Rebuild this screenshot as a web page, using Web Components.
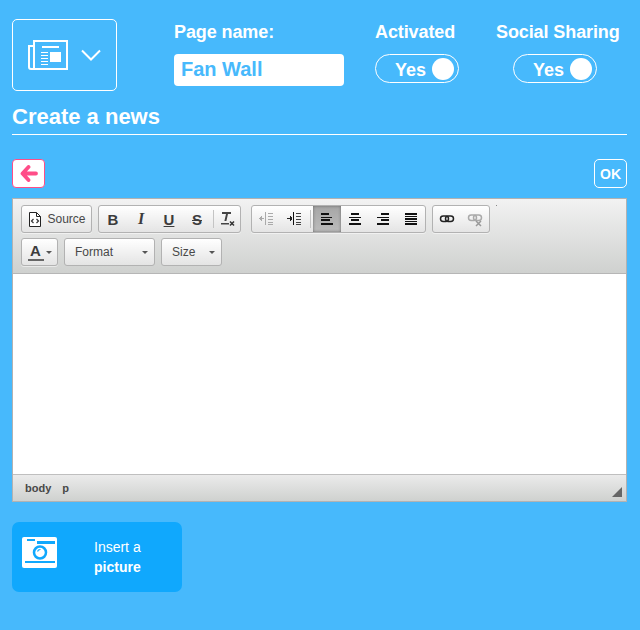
<!DOCTYPE html>
<html>
<head>
<meta charset="utf-8">
<style>
  html, body { margin: 0; padding: 0; }
  body { background: #47b9fc; font-family: "Liberation Sans", Arial, sans-serif; color: #fff; }
</style>
</head>
<body>
<news-page></news-page>
<script>
const ICONS = {
  source: '<svg width="16" height="17" viewBox="0 0 16 17"><path d="M2.500 1.500h7l4 4v10h-11z" fill="#fff" stroke="#222"/><path d="M9.500 1.500v4h4" fill="none" stroke="#222"/><path d="M6.500 8l-2 2 2 2M9.500 8l2 2-2 2" fill="none" stroke="#333" stroke-width="1.200"/></svg>',
  clear: '<svg width="18" height="18" viewBox="0 0 18 18"><path d="M3 2h9v2H9l-1.600 7H5.400L7 4H3z" fill="#444"/><rect x="2" y="13" width="8" height="1.500" fill="#444"/><path d="M11 11.500l4 4M15 11.500l-4 4" stroke="#333" stroke-width="1.500"/></svg>',
  outdent: '<svg width="16" height="16" viewBox="0 0 16 16" shape-rendering="crispEdges"><path d="M7 1h1v13H7z" fill="#aaa"/><path d="M10 2h5v1h-5zM10 5h5v1h-5zM10 8h5v1h-5zM10 11h5v1h-5zM10 13h5v1h-5z" fill="#aaa"/><path d="M1 7h5v1H1zM3 5h1v5H3zM2 6h1v3H2z" fill="#aaa"/></svg>',
  indent: '<svg width="16" height="16" viewBox="0 0 16 16" shape-rendering="crispEdges"><path d="M7 1h1v13H7z" fill="#111"/><path d="M10 2h5v1h-5zM10 5h5v1h-5zM10 8h5v1h-5zM10 11h5v1h-5zM10 13h5v1h-5z" fill="#444"/><path d="M1 7h4v1H1zM4 5h1v5H4zM5 6h1v3H5z" fill="#222"/></svg>',
  left: '<svg width="16" height="16" viewBox="0 0 16 16" shape-rendering="crispEdges"><path d="M2 2h8v2H2zM2 6h11v1H2zM2 8h9v2H2zM2 12h12v2H2z" fill="#111"/></svg>',
  center: '<svg width="16" height="16" viewBox="0 0 16 16" shape-rendering="crispEdges"><path d="M4 2h8v2H4zM2 6h12v1H2zM4 8h8v2H4zM2 12h12v2H2z" fill="#111"/></svg>',
  right: '<svg width="16" height="16" viewBox="0 0 16 16" shape-rendering="crispEdges"><path d="M6 2h8v2H6zM2 6h12v1H2zM6 8h8v2H6zM2 12h12v2H2z" fill="#111"/></svg>',
  justify: '<svg width="16" height="16" viewBox="0 0 16 16" shape-rendering="crispEdges"><path d="M2 2h12v2H2zM2 5h12v1H2zM2 7h12v2H2zM2 10h12v1H2zM2 12h12v2H2z" fill="#111"/></svg>',
  link: '<svg width="16" height="16" viewBox="0 0 16 16"><rect x="1.500" y="5" width="8" height="5.500" rx="2.700" fill="none" stroke="#222" stroke-width="1.500"/><rect x="6.500" y="5" width="8" height="5.500" rx="2.700" fill="none" stroke="#222" stroke-width="1.500"/></svg>',
  unlink: '<svg width="16" height="16" viewBox="0 0 16 16"><rect x="1.500" y="4" width="8" height="5.500" rx="2.700" fill="none" stroke="#aaa" stroke-width="1.500"/><rect x="6.500" y="4" width="8" height="5.500" rx="2.700" fill="none" stroke="#aaa" stroke-width="1.500"/><path d="M9 10l5 5M14 10l-5 5" stroke="#999" stroke-width="1.500"/></svg>'
};

class IconBox extends HTMLElement {
  constructor() {
    super();
    this.attachShadow({ mode: 'open' });
    this.shadowRoot.innerHTML = `
      <style>
        :host { display: flex; align-items: center; box-sizing: border-box; width: 105px; height: 72px; border: 1px solid #fff; border-radius: 5px; padding-left: 15px; }
        svg { display: block; }
        .chev { margin-left: 13px; }
      </style>
      <svg width="40" height="30" viewBox="0 0 40 30">
        <rect x="6" y="1" width="33" height="28" fill="none" stroke="#fff" stroke-width="2"/>
        <path d="M5 6H1v21q0 2 2 2h3" fill="none" stroke="#fff" stroke-width="2"/>
        <path d="M14 6h17v2H14zM22 12h11v10H22zM13 12h7v1h-7zM13 15h7v1h-7zM13 18h7v1h-7zM13 21h7v1h-7zM13 24h7v1h-7z" fill="#fff"/>
      </svg>
      <svg class="chev" width="20" height="12" viewBox="0 0 20 12"><path d="M1 1.500l9 9 9-9" fill="none" stroke="#fff" stroke-width="2"/></svg>`;
  }
}

class ToggleSwitch extends HTMLElement {
  constructor() {
    super();
    this.attachShadow({ mode: 'open' });
    this.shadowRoot.innerHTML = `
      <style>
        :host { display: flex; align-items: center; box-sizing: border-box; width: 84px; height: 29px; border: 1px solid #fff; border-radius: 15px; padding: 0 4px 0 19px; font-weight: bold; font-size: 18px; color: #fff; justify-content: space-between; }
        i { display: block; width: 22px; height: 22px; border-radius: 50%; background: #fff; }
        span { position: relative; top: 2px; }
      </style>
      <span><slot></slot></span><i></i>`;
  }
}

class HeaderField extends HTMLElement {
  constructor() {
    super();
    this.attachShadow({ mode: 'open' });
    this.shadowRoot.innerHTML = `
      <style>
        :host { display: flex; flex-direction: column; align-items: flex-start; gap: 11px; }
        .label { font-size: 18px; letter-spacing: -0.1px; font-weight: bold; line-height: 21px; color: #fff; white-space: nowrap; }
      </style>
      <div class="label"><slot name="label"></slot></div>
      <slot></slot>`;
  }
}

class PageHeader extends HTMLElement {
  constructor() {
    super();
    this.attachShadow({ mode: 'open' });
    this.shadowRoot.innerHTML = `
      <style>
        :host { display: flex; height: 72px; align-items: flex-start; padding: 0 0 0 12px; }
        .grid { display: grid; grid-template-columns: 170px 84px 125px; column-gap: 31px; margin-left: 57px; margin-top: 3px; }
        .name { height: 32px; width: 170px; box-sizing: border-box; background: #fff; border-radius: 4px; padding: 0 7px; color: #47b9fc; font-size: 20px; font-weight: bold; line-height: 31px; }
        .social { margin-left: 6px; }
        .social toggle-switch { margin-left: 17px; }
      </style>
      <icon-box></icon-box>
      <div class="grid">
        <header-field><span slot="label">Page name:</span><div class="name">Fan Wall</div></header-field>
        <header-field><span slot="label">Activated</span><toggle-switch>Yes</toggle-switch></header-field>
        <header-field class="social"><span slot="label">Social Sharing</span><toggle-switch>Yes</toggle-switch></header-field>
      </div>`;
  }
}

class CkeGroup extends HTMLElement {
  constructor() {
    super();
    this.attachShadow({ mode: 'open' });
    this.shadowRoot.innerHTML = `
      <style>
        :host { display: flex; box-sizing: border-box; height: 28px; border: 1px solid #b2b2b2; border-radius: 3px; background: linear-gradient(#fff, #e4e4e4); box-shadow: 0 1px 0 rgba(255,255,255,.5); overflow: hidden; }
      </style>
      <slot></slot>`;
  }
}

class CkeButton extends HTMLElement {
  constructor() {
    super();
    this.attachShadow({ mode: 'open' });
  }
  connectedCallback() {
    const icon = ICONS[this.getAttribute('icon')] || '';
    const active = this.hasAttribute('active');
    this.shadowRoot.innerHTML = `
      <style>
        :host { display: flex; align-items: center; justify-content: center; height: 26px; width: 28px; font-size: 15px; font-weight: bold; color: #3c3c3c; font-family: "Liberation Sans", Arial, sans-serif;
          ${active ? 'background: linear-gradient(#a6a6a6, #bcbcbc); box-shadow: inset 0 0 3px #666;' : ''} }
        svg { display: block; }
      </style>
      ${icon}<slot></slot>`;
  }
}

class CkeCombo extends HTMLElement {
  constructor() {
    super();
    this.attachShadow({ mode: 'open' });
    this.shadowRoot.innerHTML = `
      <style>
        :host { display: flex; align-items: center; justify-content: space-between; box-sizing: border-box; height: 28px; border: 1px solid #b2b2b2; border-radius: 3px; background: linear-gradient(#fff, #e4e4e4); font-size: 12px; color: #484848; padding: 0 6px 0 10px; }
        i { width: 0; height: 0; border: 3px solid transparent; border-top-color: #555; border-bottom: 0; }
      </style>
      <slot></slot><i></i>`;
  }
}

class CkeEditor extends HTMLElement {
  constructor() {
    super();
    this.attachShadow({ mode: 'open' });
    this.shadowRoot.innerHTML = `
      <style>
        :host { display: block; box-sizing: border-box; height: 304px; border: 1px solid #b2b2b2; background: #fff; font-family: "Liberation Sans", Arial, sans-serif; }
        .top { box-sizing: border-box; height: 75px; padding: 6px 8px 0; background: linear-gradient(#f2f2f2, #cfd1cf); border-bottom: 1px solid #b6b6b6; }
        .row { display: flex; gap: 6px; height: 28px; margin-bottom: 5px; position: relative; }
        .content { height: 200px; background: #fff; }
        .bottom { display: flex; align-items: center; box-sizing: border-box; height: 27px; padding: 0 12px; border-top: 1px solid #bfbfbf; background: linear-gradient(#ebebeb, #cfd1cf); font-size: 11px; font-weight: bold; color: #484848; gap: 11px; position: relative; }
        .sep { width: 1px; height: 18px; margin: 4px 2px; background: #c4c4c4; }
        .dot { width: 1px; height: 1px; background: #888; position: absolute; left: 475px; top: 0; }
        .grip { position: absolute; right: 4px; bottom: 4px; }
        .gap { margin-left: 4px; }
        .color { display: flex; flex-direction: column; align-items: center; width: 16px; font-size: 15px; line-height: 13px; font-weight: bold; color: #3c3c3c; border-bottom: 2px solid #666; height: 15px; }
        .caret { width: 0; height: 0; border: 3px solid transparent; border-top-color: #555; border-bottom: 0; margin-left: 2px; }
      </style>
      <div class="top">
        <div class="row">
          <cke-group><cke-button icon="source" style="width:69px;gap:4px;font-size:12px;font-weight:normal;color:#484848">Source</cke-button></cke-group>
          <cke-group>
            <cke-button>B</cke-button>
            <cke-button style="font-style:italic;font-family:'Liberation Serif',serif;font-size:16px">I</cke-button>
            <cke-button style="text-decoration:underline">U</cke-button>
            <cke-button style="text-decoration:line-through">S</cke-button>
            <div class="sep"></div>
            <cke-button icon="clear" style="width:24px"></cke-button>
          </cke-group>
          <cke-group class="gap">
            <cke-button icon="outdent"></cke-button>
            <cke-button icon="indent"></cke-button>
            <div class="sep"></div>
            <cke-button icon="left" active></cke-button>
            <cke-button icon="center"></cke-button>
            <cke-button icon="right"></cke-button>
            <cke-button icon="justify"></cke-button>
          </cke-group>
          <cke-group>
            <cke-button icon="link"></cke-button>
            <cke-button icon="unlink"></cke-button>
          </cke-group>
          <div class="dot"></div>
        </div>
        <div class="row">
          <cke-group><cke-button style="width:35px"><span class="color">A</span><span class="caret"></span></cke-button></cke-group>
          <cke-combo style="width:91px">Format</cke-combo>
          <cke-combo style="width:61px">Size</cke-combo>
        </div>
      </div>
      <div class="content"></div>
      <div class="bottom"><span>body</span><span>p</span>
        <svg class="grip" width="10" height="10" viewBox="0 0 10 10"><path d="M10 0v10H0z" fill="#666"/></svg>
      </div>`;
  }
}

class InsertButton extends HTMLElement {
  constructor() {
    super();
    this.attachShadow({ mode: 'open' });
    this.shadowRoot.innerHTML = `
      <style>
        :host { display: flex; align-items: center; box-sizing: border-box; width: 170px; height: 70px; border-radius: 7px; background: #10a8fd; color: #fff; padding-left: 10px; font-family: "Liberation Sans", Arial, sans-serif; }
        svg { display: block; margin-top: -9px; }
        .txt { margin-left: 37px; font-size: 14px; line-height: 20px; }
        ::slotted(b) { display: block; }
      </style>
      <svg width="35" height="31" viewBox="0 0 35 31">
        <rect width="35" height="31" rx="2" fill="#fff"/>
        <path d="M5 2h8v2H5zM15 4h18v3H15zM3 24h30v2H3z" fill="#10a8fd"/>
        <circle cx="18" cy="15.500" r="6" fill="none" stroke="#10a8fd" stroke-width="2.500"/>
        <path d="M15.500 14.500a3 3 0 0 1 3-2" stroke="#10a8fd" stroke-width="1.200" fill="none"/>
      </svg>
      <div class="txt"><slot></slot></div>`;
  }
}

class NewsPage extends HTMLElement {
  constructor() {
    super();
    this.attachShadow({ mode: 'open' });
    this.shadowRoot.innerHTML = `
      <style>
        :host { display: block; box-sizing: border-box; height: 630px; padding-top: 19px; font-family: "Liberation Sans", Arial, sans-serif; color: #fff; }
        h2 { margin: 10px 13px 0 12px; box-sizing: content-box; height: 33px; font-size: 22px; line-height: 31px; font-weight: bold; border-bottom: 1px solid #fff; }
        .actions { display: flex; justify-content: space-between; margin: 24px 13px 10px 12px; height: 29px; }
        .back { display: flex; align-items: center; justify-content: center; box-sizing: border-box; width: 33px; height: 29px; background: #fff; border: 1px solid #ff4d88; border-radius: 4px; }
        .ok { display: flex; align-items: center; justify-content: center; box-sizing: border-box; width: 33px; height: 29px; border: 1px solid #fff; border-radius: 5px; font-size: 14px; font-weight: bold; }
        cke-editor { margin: 0 13px 0 12px; }
        insert-button { margin: 20px 0 0 12px; }
      </style>
      <page-header></page-header>
      <h2>Create a news</h2>
      <div class="actions">
        <div class="back"><svg width="18" height="17" viewBox="0 0 18 17"><path d="M8.500 2L2.500 8.500l6 6.500M3 8.500h13" fill="none" stroke="#ff4d88" stroke-width="3.800" stroke-linecap="round" stroke-linejoin="round"/></svg></div>
        <div class="ok">OK</div>
      </div>
      <cke-editor></cke-editor>
      <insert-button>Insert a<b>picture</b></insert-button>`;
  }
}

customElements.define('icon-box', IconBox);
customElements.define('toggle-switch', ToggleSwitch);
customElements.define('header-field', HeaderField);
customElements.define('page-header', PageHeader);
customElements.define('cke-group', CkeGroup);
customElements.define('cke-button', CkeButton);
customElements.define('cke-combo', CkeCombo);
customElements.define('cke-editor', CkeEditor);
customElements.define('insert-button', InsertButton);
customElements.define('news-page', NewsPage);
</script>
</body>
</html>
